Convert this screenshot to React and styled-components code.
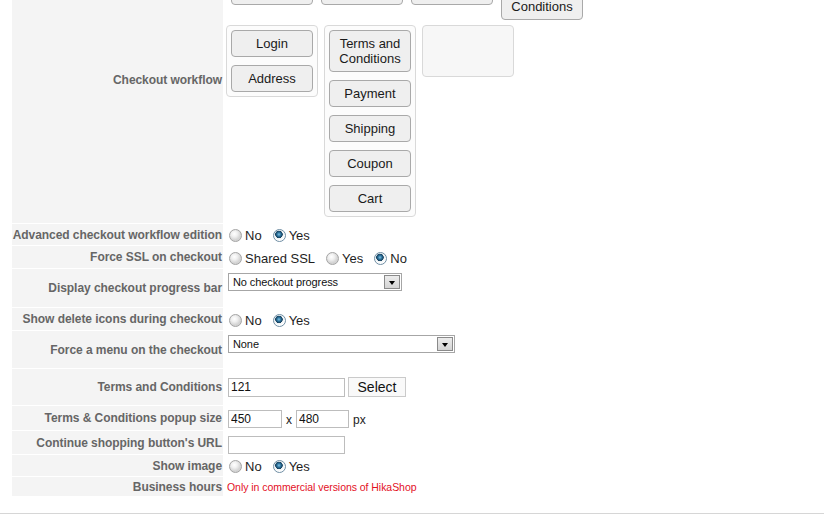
import React from 'react'
import styled, { createGlobalStyle } from 'styled-components'

const GlobalStyle = createGlobalStyle`
    html, body {
        margin: 0;
        padding: 0;
        background: #fff;
        font-family: "Liberation Sans", Arial, sans-serif;
        overflow: hidden;
    }
`

// styling
    const Page = styled.div`
        margin-top: -64px;
        padding-bottom: 17px;
        border-bottom: 2px solid #d6d6d6;
    `

    const ConfigTable = styled.div`
        display: grid;
        grid-template-columns: 211px 1fr;
        gap: 1px;
        margin-left: 12px;
    `

    const Key = styled.div`
        display: flex;
        align-items: center;
        justify-content: flex-end;
        text-align: right;
        min-height: ${ p => p.$h }px;
        padding-right: 1px;
        background: #f4f4f4;
        color: #666;
        font-size: 12px;
        font-weight: bold;
        letter-spacing: -0.06px;
        white-space: nowrap;
    `

    const Value = styled.div`
        display: flex;
        align-items: ${ p => p.$top ? 'flex-start' : 'center' };
        padding-top: ${ p => p.$top ? 4 : 0 }px;
        padding-left: ${ p => p.$pl ?? 4 }px;
        box-sizing: border-box;
        color: #222;
        font-size: 13px;
    `

    const Workflow = styled.div`
        padding-top: 42px;
    `

    const TopList = styled.div`
        display: flex;
        align-items: flex-start;
        gap: 8px;
        padding: 0 5px;
        margin-bottom: 5px;
    `

    const Columns = styled.div`
        display: flex;
        align-items: flex-start;
        gap: 6px;
    `

    const Column = styled.div`
        display: flex;
        flex-direction: column;
        gap: 8px;
        width: 82px;
        min-height: 42px;
        padding: 4px;
        border: 1px solid #d9d9d9;
        border-radius: 4px;
        background: ${ p => p.$empty ? '#f7f7f7' : '#fcfcfc' };
    `

    const Step = styled.div`
        box-sizing: border-box;
        width: 82px;
        min-height: 27px;
        padding: 5px 2px;
        border: 1px solid #a9a9a9;
        border-radius: 4px;
        background: #efefef;
        color: #1a1a1a;
        font-size: 13px;
        line-height: 15px;
        text-align: center;
    `

    const Option = styled.label`
        display: inline-flex;
        align-items: center;
        margin-right: 11px;
        padding-top: 2px;
        font-size: 13px;
        color: #1e1e1e;
        white-space: nowrap;
    `

    const Radio = styled.span`
        display: inline-block;
        box-sizing: border-box;
        width: 13px;
        height: 13px;
        margin-right: 3px;
        border-radius: 50%;
        border: 1px solid ${ p => p.$on ? '#6f8ea4' : '#a4a4a4' };
        background: ${ p => p.$on
            ? 'radial-gradient(circle at 45% 40%, #7fc2e6 0, #2a6f98 2px, #163f5c 3.5px, #eef2f4 4px, #ffffff 6px)'
            : 'radial-gradient(circle at 40% 35%, #ffffff 0, #f0f0f0 3px, #d4d4d4 6px)' };
    `

    const SelectBox = styled.div`
        display: flex;
        align-items: center;
        justify-content: space-between;
        box-sizing: border-box;
        width: ${ p => p.$w }px;
        height: 18px;
        padding-left: 4px;
        border: 1px solid #a6a6a6;
        background: #fff;
        font-size: 11px;
        letter-spacing: -0.1px;
        color: #111;
    `

    const Arrow = styled.span`
        display: flex;
        align-items: center;
        justify-content: center;
        box-sizing: border-box;
        width: 16px;
        height: 14px;
        margin-right: 1px;
        border: 1px solid #8a8a8a;
        background: linear-gradient(#ececec, #d4d4d4);

        &::after {
            content: '';
            border-left: 3.5px solid transparent;
            border-right: 3.5px solid transparent;
            border-top: 4px solid #000;
            margin-top: 1px;
        }
    `

    const TextInput = styled.input`
        box-sizing: border-box;
        width: ${ p => p.$w }px;
        height: ${ p => p.$h ?? 18 }px;
        margin: 0;
        padding: 0 2px;
        border: 1px solid #bdbdbd;
        font-family: "Liberation Sans", Arial, sans-serif;
        font-size: 12px;
        color: #111;
        outline: none;
    `

    const PickButton = styled.button`
        box-sizing: border-box;
        width: 58px;
        height: 20px;
        margin: -1px 0 0 3px;
        padding: 0;
        border: 1px solid #cacaca;
        background: #f9f9f9;
        font-family: "Liberation Sans", Arial, sans-serif;
        font-size: 14px;
        color: #111;
    `

    const Unit = styled.span`
        margin: 0 ${ p => p.$after ? 0 : 4 }px 0 4px;
        font-size: 12px;
        line-height: 20px;
        color: #222;
    `

    const Notice = styled.span`
        margin-left: -1px;
        font-size: 10.5px;
        letter-spacing: -0.05px;
        color: #e3101f;
    `

const Choice = ({ items, value }) => (
    <>
        { items.map(item => (
            <Option key={ item }><Radio $on={ item === value } />{ item }</Option>
        )) }
    </>
)

const App = () => {

    return (
        <Page>
            <GlobalStyle />
            <ConfigTable>

                <Key $h={ 287 }>Checkout workflow</Key>
                <Value $pl={ 2 } style={{ alignItems: 'flex-start' }}>
                    <Workflow>
                        <TopList>
                            <Step />
                            <Step />
                            <Step />
                            <Step>Terms and Conditions</Step>
                        </TopList>
                        <Columns>
                            <Column>
                                <Step>Login</Step>
                                <Step>Address</Step>
                            </Column>
                            <Column>
                                <Step>Terms and Conditions</Step>
                                <Step>Payment</Step>
                                <Step>Shipping</Step>
                                <Step>Coupon</Step>
                                <Step>Cart</Step>
                            </Column>
                            <Column $empty />
                        </Columns>
                    </Workflow>
                </Value>

                <Key $h={ 21 }>Advanced checkout workflow edition</Key>
                <Value $pl={ 5 }><Choice items={ ['No', 'Yes'] } value="Yes" /></Value>

                <Key $h={ 22 }>Force SSL on checkout</Key>
                <Value $pl={ 5 }><Choice items={ ['Shared SSL', 'Yes', 'No'] } value="No" /></Value>

                <Key $h={ 38 }>Display checkout progress bar</Key>
                <Value $top>
                    <SelectBox $w={ 174 }>No checkout progress<Arrow /></SelectBox>
                </Value>

                <Key $h={ 22 }>Show delete icons during checkout</Key>
                <Value $pl={ 5 }><Choice items={ ['No', 'Yes'] } value="Yes" /></Value>

                <Key $h={ 37 }>Force a menu on the checkout</Key>
                <Value $top>
                    <SelectBox $w={ 227 }>None<Arrow /></SelectBox>
                </Value>

                <Key $h={ 36 }>Terms and Conditions</Key>
                <Value>
                    <TextInput $w={ 117 } $h={ 19 } defaultValue="121" />
                    <PickButton>Select</PickButton>
                </Value>

                <Key $h={ 23 }>Terms &amp; Conditions popup size</Key>
                <Value $top>
                    <TextInput $w={ 54 } defaultValue="450" />
                    <Unit>x</Unit>
                    <TextInput $w={ 53 } defaultValue="480" />
                    <Unit $after>px</Unit>
                </Value>

                <Key $h={ 23 }>Continue shopping button's URL</Key>
                <Value $top style={{ paddingTop: 5 }}>
                    <TextInput $w={ 117 } defaultValue="" />
                </Value>

                <Key $h={ 21 }>Show image</Key>
                <Value $pl={ 5 }><Choice items={ ['No', 'Yes'] } value="Yes" /></Value>

                <Key $h={ 19 }>Business hours</Key>
                <Value><Notice>Only in commercial versions of HikaShop</Notice></Value>

            </ConfigTable>
        </Page>
    )
}

export default App
